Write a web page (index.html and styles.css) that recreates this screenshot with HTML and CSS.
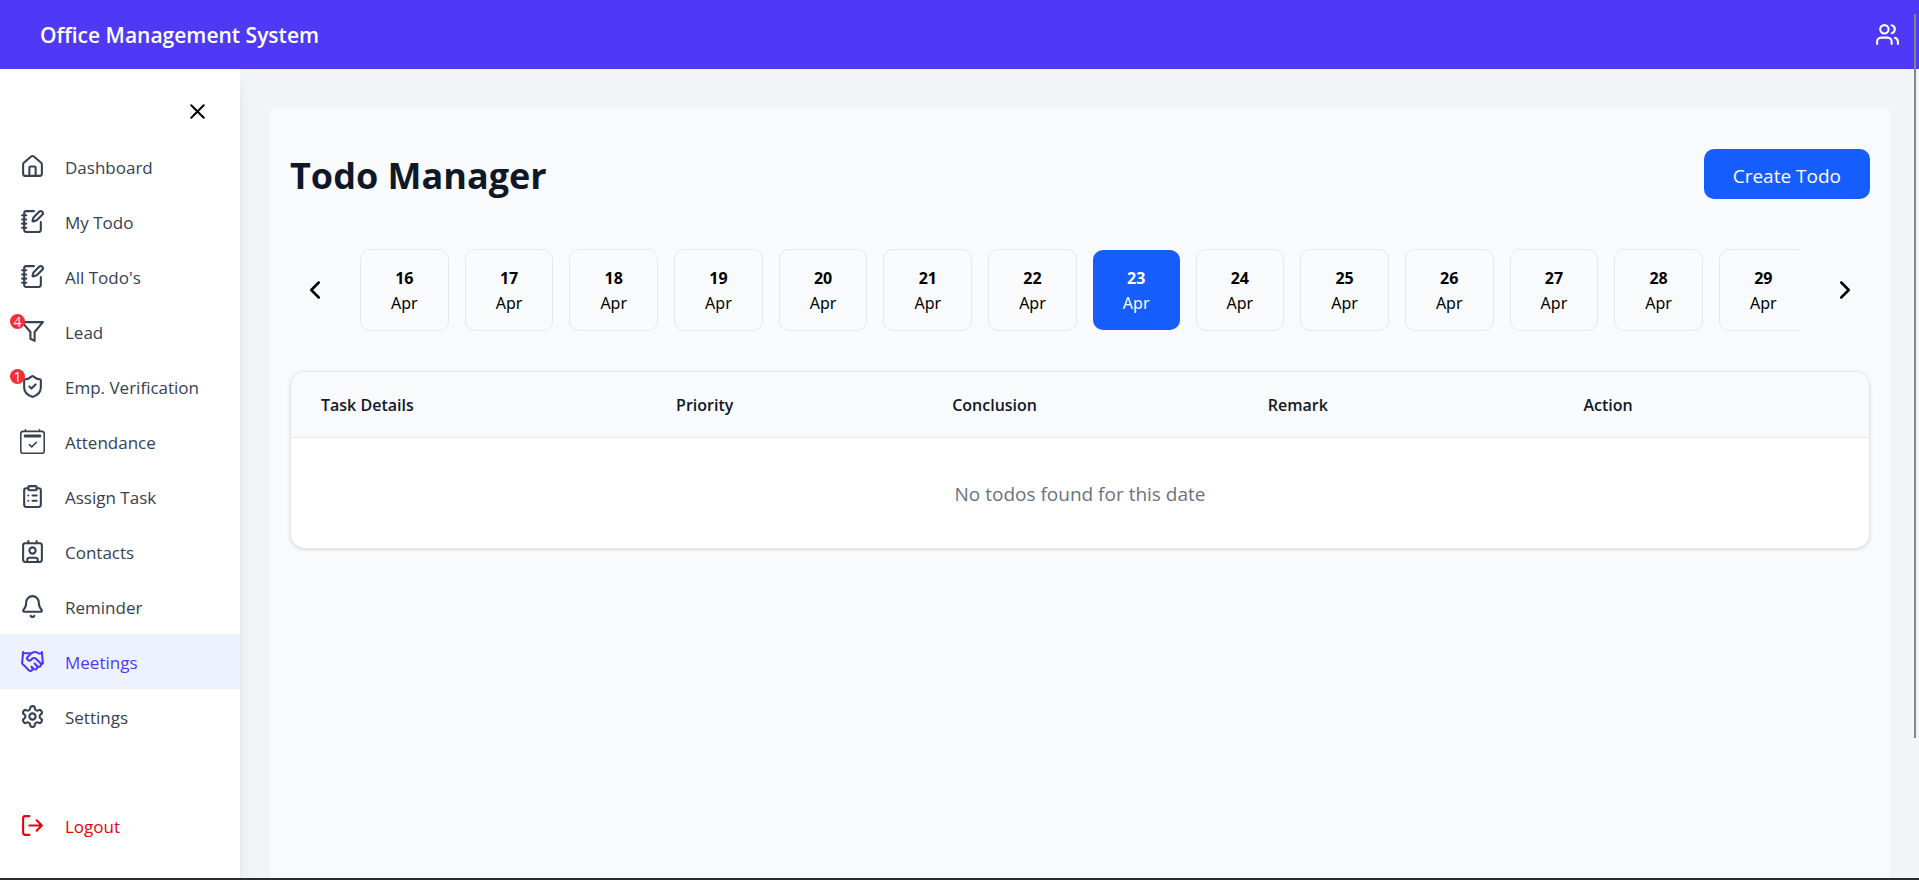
FILE: index.html
```html
<!DOCTYPE html>
<html lang="en">
<head>
<meta charset="utf-8">
<title>Office Management System</title>
<meta name="viewport" content="width=device-width, initial-scale=1">
<link rel="stylesheet" href="styles.css">
</head>
<body>
<svg class="sprite" aria-hidden="true">
  <symbol id="notebook" viewBox="0 0 24 24"><path d="M13.4 2H6a2 2 0 0 0-2 2v16a2 2 0 0 0 2 2h12a2 2 0 0 0 2-2v-7.4"/><path d="M2 6h4M2 10h4M2 14h4M2 18h4"/><path d="M21.378 5.626a1 1 0 1 0-3.004-3.004l-5.01 5.012a2 2 0 0 0-.506.854l-.837 2.87a.5.5 0 0 0 .62.62l2.87-.837a2 2 0 0 0 .854-.506z"/></symbol>
</svg>

<header class="topbar">
  <span class="brand">Office Management System</span>
  <button class="icon-btn" type="button" aria-label="Users">
    <svg class="icon" viewBox="0 0 24 24"><path d="M16 21v-2a4 4 0 0 0-4-4H6a4 4 0 0 0-4 4v2"/><circle cx="9" cy="7" r="4"/><path d="M22 21v-2a4 4 0 0 0-3-3.87"/><path d="M16 3.13a4 4 0 0 1 0 7.75"/></svg>
  </button>
</header>

<div class="layout">
  <aside class="sidebar">
    <div class="sidebar-top">
      <button class="icon-btn" type="button" aria-label="Close menu">
        <svg class="icon" viewBox="0 0 24 24"><path d="M18 6 6 18M6 6l12 12"/></svg>
      </button>
    </div>
    <nav class="nav">
      <a class="nav-link" href="#"><svg class="icon" viewBox="0 0 24 24"><path d="M15 21v-8a1 1 0 0 0-1-1h-4a1 1 0 0 0-1 1v8"/><path d="M3 10a2 2 0 0 1 .709-1.528l7-5.999a2 2 0 0 1 2.582 0l7 5.999A2 2 0 0 1 21 10v9a2 2 0 0 1-2 2H5a2 2 0 0 1-2-2z"/></svg><span>Dashboard</span></a>
      <a class="nav-link" href="#"><svg class="icon"><use href="#notebook"/></svg><span>My Todo</span></a>
      <a class="nav-link" href="#"><svg class="icon"><use href="#notebook"/></svg><span>All Todo's</span></a>
      <a class="nav-link" href="#"><svg class="icon" viewBox="0 0 24 24"><path stroke-linejoin="round" d="M22 3H2l8 9.46V19l4 2v-8.54z"/></svg><span>Lead</span><b class="badge">4</b></a>
      <a class="nav-link" href="#"><svg class="icon" viewBox="0 0 24 24"><path d="M20 13c0 5-3.5 7.5-7.66 8.95a1 1 0 0 1-.67-.01C7.5 20.5 4 18 4 13V6a1 1 0 0 1 1-1c2 0 4.5-1.2 6.24-2.72a1.17 1.17 0 0 1 1.52 0C14.51 3.81 17 5 19 5a1 1 0 0 1 1 1z"/><path d="m9 12 2 2 4-4"/></svg><span>Emp. Verification</span><b class="badge">1</b></a>
      <a class="nav-link" href="#"><svg class="icon icon-solid" viewBox="0 0 16 16"><path d="M10.854 8.146a.5.5 0 0 1 0 .708l-3 3a.5.5 0 0 1-.708 0l-1.5-1.5a.5.5 0 0 1 .708-.708L7.5 10.793l2.646-2.647a.5.5 0 0 1 .708 0"/><path d="M3.5 0a.5.5 0 0 1 .5.5V1h8V.5a.5.5 0 0 1 1 0V1h1a2 2 0 0 1 2 2v11a2 2 0 0 1-2 2H2a2 2 0 0 1-2-2V3a2 2 0 0 1 2-2h1V.5a.5.5 0 0 1 .5-.5M2 2a1 1 0 0 0-1 1v11a1 1 0 0 0 1 1h12a1 1 0 0 0 1-1V3a1 1 0 0 0-1-1z"/><path d="M2.5 4a.5.5 0 0 1 .5-.5h10a.5.5 0 0 1 .5.5v1a.5.5 0 0 1-.5.5H3a.5.5 0 0 1-.5-.5z"/></svg><span>Attendance</span></a>
      <a class="nav-link" href="#"><svg class="icon" viewBox="0 0 24 24"><rect x="8" y="2" width="8" height="4" rx="1"/><path d="M16 4h2a2 2 0 0 1 2 2v14a2 2 0 0 1-2 2H6a2 2 0 0 1-2-2V6a2 2 0 0 1 2-2h2M12 11h4M12 16h4M8 11h.01M8 16h.01"/></svg><span>Assign Task</span></a>
      <a class="nav-link" href="#"><svg class="icon" viewBox="0 0 24 24"><path d="M16 2v2M8 2v2M7 22v-2a2 2 0 0 1 2-2h6a2 2 0 0 1 2 2v2"/><circle cx="12" cy="11" r="3"/><rect x="3" y="4" width="18" height="18" rx="2"/></svg><span>Contacts</span></a>
      <a class="nav-link" href="#"><svg class="icon" viewBox="0 0 24 24"><path d="M10.268 21a2 2 0 0 0 3.464 0"/><path d="M3.262 15.326A1 1 0 0 0 4 17h16a1 1 0 0 0 .74-1.673C19.41 13.956 18 12.499 18 8A6 6 0 0 0 6 8c0 4.499-1.411 5.956-2.738 7.326"/></svg><span>Reminder</span></a>
      <a class="nav-link is-active" href="#" aria-current="page"><svg class="icon" viewBox="0 0 24 24"><path d="m11 17 2 2a1 1 0 1 0 3-3"/><path d="m14 14 2.5 2.5a1 1 0 1 0 3-3l-3.88-3.88a3 3 0 0 0-4.24 0l-.88.88a1 1 0 1 1-3-3l2.81-2.81a5.79 5.79 0 0 1 7.06-.87l.47.28a2 2 0 0 0 1.42.25L21 4"/><path d="m21 3 1 11h-2M3 3 2 14l6.5 6.5a1 1 0 1 0 3-3M3 4h8"/></svg><span>Meetings</span></a>
      <a class="nav-link" href="#"><svg class="icon" viewBox="0 0 24 24"><path d="M12.22 2h-.44a2 2 0 0 0-2 2v.18a2 2 0 0 1-1 1.73l-.43.25a2 2 0 0 1-2 0l-.15-.08a2 2 0 0 0-2.73.73l-.22.38a2 2 0 0 0 .73 2.73l.15.1a2 2 0 0 1 1 1.72v.51a2 2 0 0 1-1 1.74l-.15.09a2 2 0 0 0-.73 2.73l.22.38a2 2 0 0 0 2.73.73l.15-.08a2 2 0 0 1 2 0l.43.25a2 2 0 0 1 1 1.73V20a2 2 0 0 0 2 2h.44a2 2 0 0 0 2-2v-.18a2 2 0 0 1 1-1.73l.43-.25a2 2 0 0 1 2 0l.15.08a2 2 0 0 0 2.73-.73l.22-.39a2 2 0 0 0-.73-2.73l-.15-.08a2 2 0 0 1-1-1.74v-.5a2 2 0 0 1 1-1.74l.15-.09a2 2 0 0 0 .73-2.73l-.22-.38a2 2 0 0 0-2.73-.73l-.15.08a2 2 0 0 1-2 0l-.43-.25a2 2 0 0 1-1-1.73V4a2 2 0 0 0-2-2z"/><circle cx="12" cy="12" r="3"/></svg><span>Settings</span></a>
    </nav>
    <button class="nav-link logout" type="button"><svg class="icon" viewBox="0 0 24 24"><path d="M9 21H5a2 2 0 0 1-2-2V5a2 2 0 0 1 2-2h4M16 17l5-5-5-5M21 12H9"/></svg><span>Logout</span></button>
  </aside>

  <main class="main">
    <section class="panel">
      <div class="panel-head">
        <h1 class="title">Todo Manager</h1>
        <button class="create" type="button">Create Todo</button>
      </div>

      <div class="dates">
        <button class="arrow" type="button" aria-label="Previous dates"><svg class="icon icon-lg" viewBox="0 0 24 24"><path d="m15 18-6-6 6-6"/></svg></button>
        <div class="date-list">
          <button class="date" type="button"><b>16</b><span>Apr</span></button>
          <button class="date" type="button"><b>17</b><span>Apr</span></button>
          <button class="date" type="button"><b>18</b><span>Apr</span></button>
          <button class="date" type="button"><b>19</b><span>Apr</span></button>
          <button class="date" type="button"><b>20</b><span>Apr</span></button>
          <button class="date" type="button"><b>21</b><span>Apr</span></button>
          <button class="date" type="button"><b>22</b><span>Apr</span></button>
          <button class="date is-selected" type="button" aria-pressed="true"><b>23</b><span>Apr</span></button>
          <button class="date" type="button"><b>24</b><span>Apr</span></button>
          <button class="date" type="button"><b>25</b><span>Apr</span></button>
          <button class="date" type="button"><b>26</b><span>Apr</span></button>
          <button class="date" type="button"><b>27</b><span>Apr</span></button>
          <button class="date" type="button"><b>28</b><span>Apr</span></button>
          <button class="date" type="button"><b>29</b><span>Apr</span></button>
        </div>
        <button class="arrow" type="button" aria-label="Next dates"><svg class="icon icon-lg" viewBox="0 0 24 24"><path d="m9 18 6-6-6-6"/></svg></button>
      </div>

      <div class="card">
        <table class="todos">
          <colgroup><col class="col-task"><col class="col-priority"><col class="col-wide"><col class="col-wide"><col></colgroup>
          <thead>
            <tr><th scope="col">Task Details</th><th scope="col">Priority</th><th scope="col">Conclusion</th><th scope="col">Remark</th><th scope="col">Action</th></tr>
          </thead>
          <tbody>
            <tr><td class="empty" colspan="5">No todos found for this date</td></tr>
          </tbody>
        </table>
      </div>
    </section>
  </main>
</div>

<div class="window-edge"></div>
<div class="scroll-thumb"></div>
</body>
</html>
```
FILE: styles.css
```css
*,
*::before,
*::after {
  box-sizing: border-box;
}

body {
  margin: 0;
  height: 100vh;
  display: flex;
  flex-direction: column;
  overflow: hidden;
  position: relative;
  background: #f3f4f6;
  color: #000;
  font-family: "Open Sans", "Noto Sans", sans-serif;
  font-size: 16px;
  line-height: 24px;
}

button {
  margin: 0;
  padding: 0;
  border: 0;
  background: none;
  color: inherit;
  font: inherit;
  cursor: pointer;
}

a {
  color: inherit;
  text-decoration: none;
}

.sprite {
  display: none;
}

.icon {
  display: block;
  flex: none;
  width: 25px;
  height: 25px;
  fill: none;
  stroke: currentColor;
  stroke-width: 2;
  stroke-linecap: round;
  stroke-linejoin: round;
}

.icon-lg {
  width: 30px;
  height: 30px;
}

.icon-solid {
  fill: currentColor;
  stroke: none;
}

/* Top bar */
.topbar {
  flex: none;
  display: flex;
  align-items: center;
  justify-content: space-between;
  height: 69px;
  padding: 0 19px 0 40px;
  background: #4f39f6;
  color: #fff;
}

.brand {
  font-size: 21px;
  font-weight: 600;
  line-height: 32px;
}

/* Shell */
.layout {
  flex: 1;
  min-height: 0;
  display: flex;
  overflow: hidden;
}

.sidebar {
  flex: none;
  display: flex;
  flex-direction: column;
  width: 240px;
  padding-bottom: 25px;
  background: #fff;
  box-shadow: 0 12px 19px -4px rgba(0, 0, 0, 0.1), 0 5px 8px -5px rgba(0, 0, 0, 0.1);
}

.sidebar-top {
  display: flex;
  justify-content: flex-end;
  padding: 30px 30px 15px;
}

.nav {
  flex: 1;
}

.nav-link {
  position: relative;
  display: flex;
  align-items: center;
  gap: 20px;
  width: 100%;
  height: 55px;
  padding: 0 20px;
  color: #364153;
  font-size: 17px;
}

.nav-link span {
  padding-top: 2px;
}

.nav-link.is-active {
  background: #eef2ff;
  color: #4f39f6;
}

.nav-link.logout {
  color: #e7000b;
}

.badge {
  position: absolute;
  left: 10px;
  top: 10px;
  width: 15px;
  height: 15px;
  border-radius: 50%;
  background: #fb2c36;
  color: #fff;
  font-size: 14px;
  font-weight: 400;
  line-height: 15px;
  text-align: center;
}

/* Main panel */
.main {
  flex: 1;
  min-width: 0;
  display: flex;
  padding: 40px 29px 0 30px;
}

.panel {
  flex: 1;
  min-width: 0;
  padding: 40px 20px;
  background: #f9fafc;
}

.panel-head {
  display: flex;
  align-items: center;
  justify-content: space-between;
  margin-bottom: 50px;
}

.title {
  margin: 0;
  padding-top: 4px;
  color: #101828;
  font-size: 36px;
  font-weight: 700;
  line-height: 46px;
}

.create {
  height: 50px;
  padding: 3px 29px 0;
  border-radius: 10px;
  background: #155dfc;
  color: #fff;
  font-size: 19px;
}

/* Date strip */
.dates {
  display: flex;
  align-items: center;
  gap: 20px;
  margin-bottom: 40px;
  font-family: "Noto Sans", "Open Sans", sans-serif;
}

.arrow {
  flex: none;
  padding: 10px;
}

.date-list {
  flex: 1;
  min-width: 0;
  display: flex;
  align-items: center;
  gap: 16px;
  overflow: hidden;
}

.date {
  flex: none;
  display: flex;
  flex-direction: column;
  align-items: center;
  padding: 16px 30px 14px;
  border: 1px solid #e5e7eb;
  border-radius: 10px;
  line-height: 25px;
}

.date.is-selected {
  border: 0;
  background: #155dfc;
  color: #fff;
}

/* Todo table */
.card {
  overflow: hidden;
  border: 1px solid #e5e7eb;
  border-radius: 15px;
  background: #fff;
  box-shadow: 0 1px 4px rgba(0, 0, 0, 0.1), 0 1px 2px -1px rgba(0, 0, 0, 0.1);
}

.todos {
  width: 100%;
  border-collapse: collapse;
  table-layout: fixed;
}

.col-task {
  width: 22.5%;
}

.col-priority {
  width: 17.5%;
}

.col-wide {
  width: 20%;
}

.todos th {
  padding: 21px 30px 19px;
  border-bottom: 1px solid #e5e7eb;
  background: #f9fafc;
  color: #101828;
  font-weight: 600;
  line-height: 25px;
  text-align: left;
}

.todos .empty {
  padding: 41px 30px 39px;
  color: #6a7282;
  font-size: 19px;
  line-height: 30px;
  text-align: center;
}

/* Window chrome */
.window-edge {
  flex: none;
  height: 2px;
  background: #2b2b2d;
}

.scroll-thumb {
  position: absolute;
  top: 14px;
  right: 3px;
  width: 2px;
  height: 724px;
  background: #858585;
}
```
